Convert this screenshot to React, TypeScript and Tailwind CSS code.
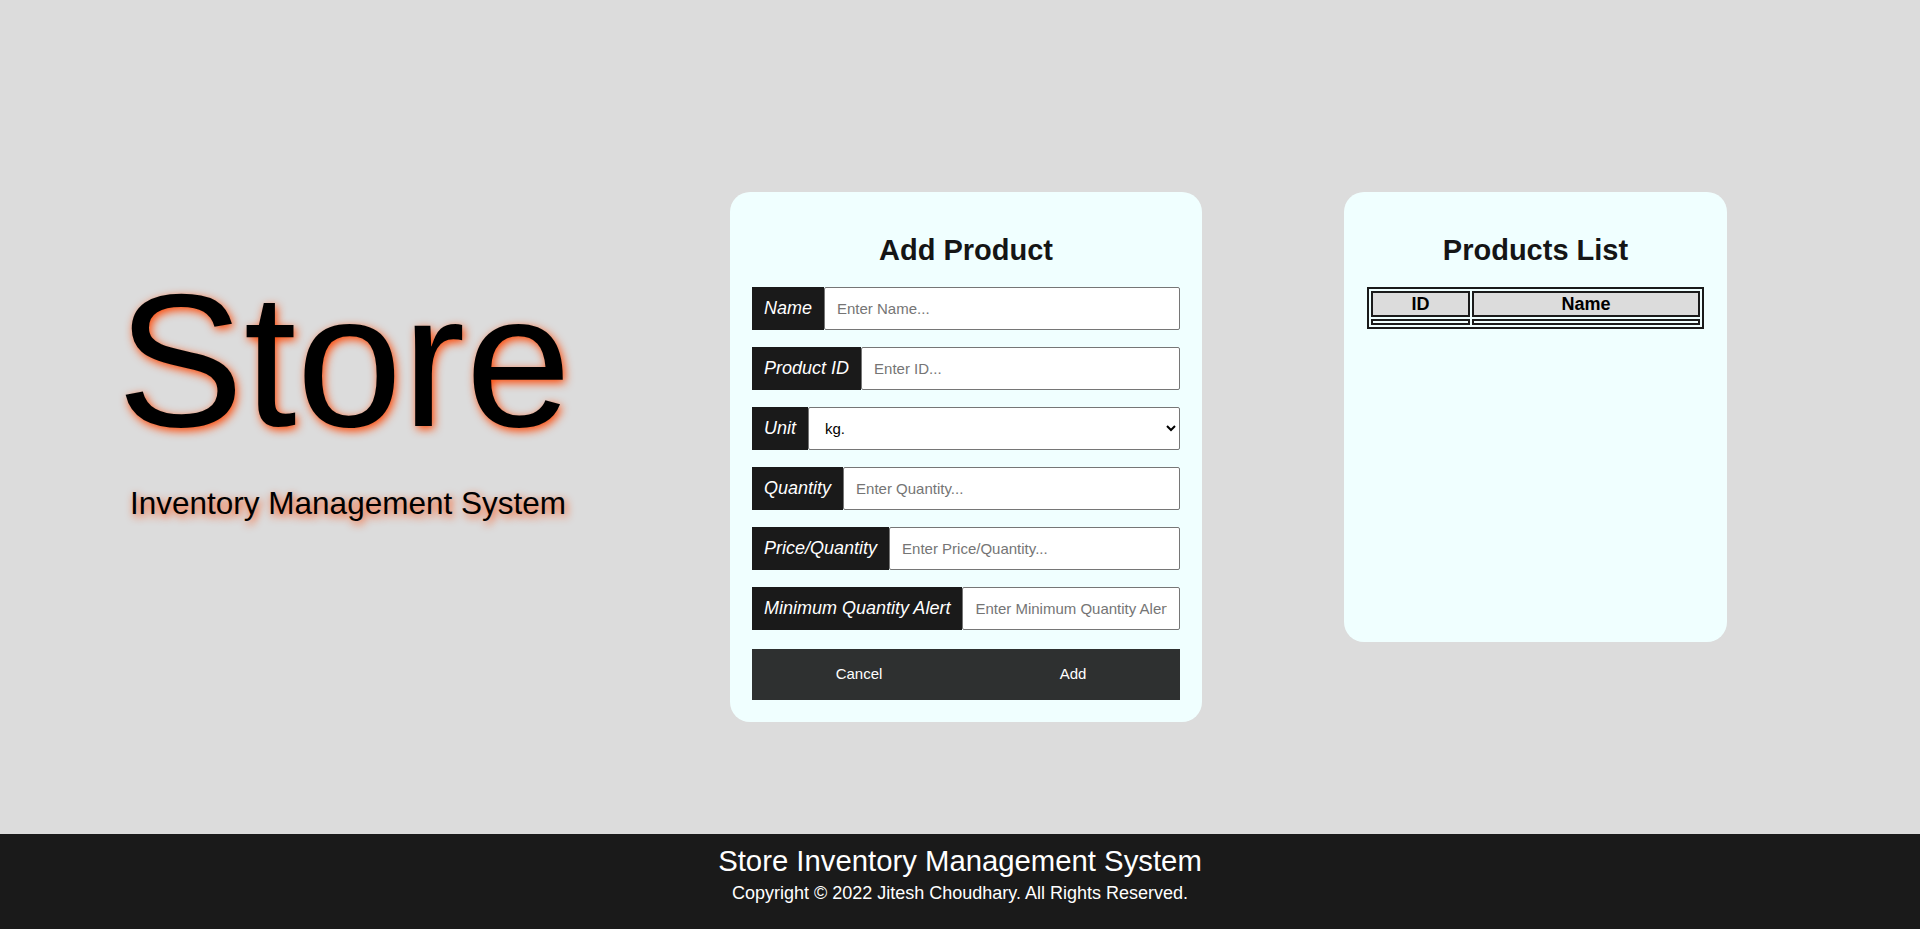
import { useState } from "react"

const fields = [
  { label: "Name", placeholder: "Enter Name..." },
  { label: "Product ID", placeholder: "Enter ID..." },
  { label: "Unit", select: true },
  { label: "Quantity", placeholder: "Enter Quantity..." },
  { label: "Price/Quantity", placeholder: "Enter Price/Quantity..." },
  { label: "Minimum Quantity Alert", placeholder: "Enter Minimum Quantity Alert..." },
]

function AddProduct() {
  const [unit, setUnit] = useState("kg.")

  return (
    <div className="w-[472px] bg-[#f0ffff] rounded-[20px] px-[22px] pt-[43px] pb-[22px] mt-[192px] ml-[156px] shrink-0">
      <h2 className="text-[29px] leading-[30px] font-bold text-center text-[#151515] mb-[22px]">Add Product</h2>
      <div className="flex flex-col gap-[17px]">
        {fields.map((f) => (
          <div key={f.label} className="flex h-[43px]">
            <span className="flex items-center bg-[#1a1a1a] text-white italic text-[18px] px-[12px] whitespace-nowrap shrink-0">
              {f.label}
            </span>
            {f.select ? (
              <select
                value={unit}
                onChange={(e) => setUnit(e.target.value)}
                className="flex-1 min-w-0 h-full bg-white border border-[#767676] rounded-[2px] px-[12px] text-[15px] text-black"
              >
                <option>kg.</option>
                <option>g.</option>
                <option>litre</option>
                <option>piece</option>
              </select>
            ) : (
              <input
                placeholder={f.placeholder}
                className="flex-1 min-w-0 h-full bg-white border border-[#767676] rounded-[2px] px-[12px] text-[15px] text-black placeholder:text-[#757575] outline-none"
              />
            )}
          </div>
        ))}
      </div>
      <div className="flex mt-[19px] h-[51px] bg-[#2e3030]">
        <button className="flex-1 text-white text-[15px]">Cancel</button>
        <button className="flex-1 text-white text-[15px]">Add</button>
      </div>
    </div>
  )
}

function ProductsList() {
  return (
    <div className="w-[383px] h-[450px] bg-[#f0ffff] rounded-[20px] px-[23px] pt-[43px] mt-[192px] ml-[142px] shrink-0">
      <h2 className="text-[29px] leading-[30px] font-bold text-center text-[#151515] mb-[22px]">Products List</h2>
      <table className="w-full border-separate border-spacing-[2px] border-2 border-[#1a1a1a]">
        <thead>
          <tr>
            <th className="w-[99px] border-2 border-[#1a1a1a] bg-[#dcdcdc] text-[18px] leading-[21px] font-bold text-black p-0 pt-px">ID</th>
            <th className="border-2 border-[#1a1a1a] bg-[#dcdcdc] text-[18px] leading-[21px] font-bold text-black p-0 pt-px">Name</th>
          </tr>
        </thead>
        <tbody>
          <tr>
            <td className="border-2 border-[#1a1a1a] p-px"></td>
            <td className="border-2 border-[#1a1a1a] p-px"></td>
          </tr>
        </tbody>
      </table>
    </div>
  )
}

export default function App() {
  return (
    <div className="w-full min-h-[929px] bg-[#dcdcdc] font-['Liberation_Sans',Arial,sans-serif]">
      <main className="h-[834px] flex items-start">
        <div className="w-[460px] ml-[114px] mt-[265px] shrink-0 text-center text-black">
          <h1 className="text-[190px] leading-none [text-shadow:2px_3px_10px_#ff4500]">Store</h1>
          <p className="text-[31.5px] leading-none mt-[33px] pl-[8px] [text-shadow:2px_3px_8px_#ff4500]">Inventory Management System</p>
        </div>
        <AddProduct />
        <ProductsList />
      </main>
      <footer className="h-[95px] bg-[#1a1a1a] text-white text-center pt-[10px]">
        <p className="text-[29.3px] leading-[33px]">Store Inventory Management System</p>
        <p className="text-[18px] leading-[21px] mt-[6px]">Copyright © 2022 Jitesh Choudhary. All Rights Reserved.</p>
      </footer>
    </div>
  )
}
